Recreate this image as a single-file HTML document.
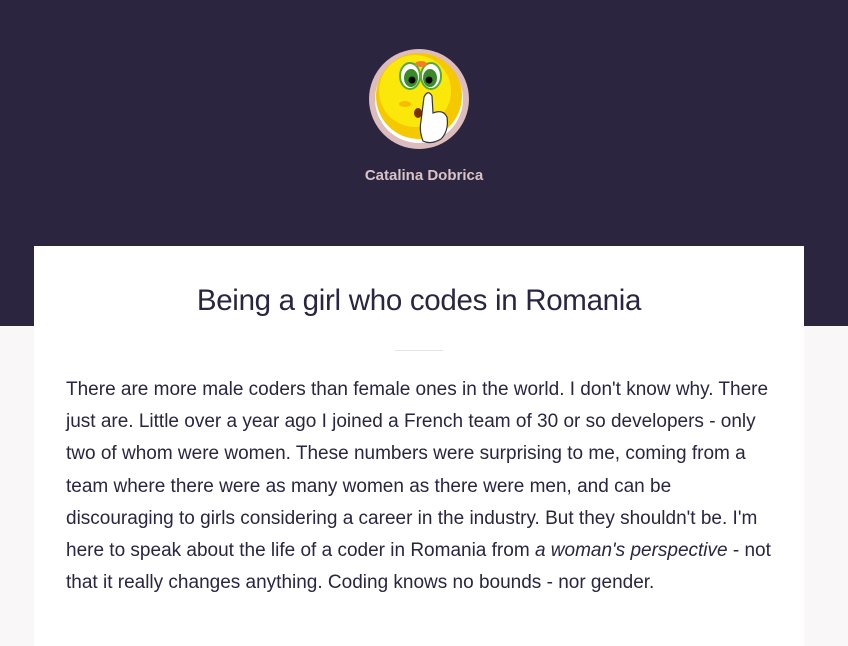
<!DOCTYPE html>
<html><head><meta charset="utf-8"><style>
html,body{margin:0;padding:0;}
body{width:848px;height:608px;overflow:hidden;background:#f9f7f8;font-family:"Liberation Sans",sans-serif;position:relative;}
.hdr{position:absolute;left:0;top:0;width:848px;height:326px;background:#2c2540;}
.av{position:absolute;left:369px;top:49px;width:100px;height:100px;border-radius:50%;background:#dcbcbc;}
.name{position:absolute;left:0;width:848px;top:167px;text-align:center;color:#d9c3c5;font-weight:bold;font-size:15px;}
.card{position:absolute;left:34px;top:246px;width:770px;height:400px;background:#fff;}
h1{position:absolute;top:284px;left:0;width:838px;text-align:center;margin:0;font-weight:normal;font-size:29.5px;color:#2a2540;letter-spacing:-0.3px;}
.div{position:absolute;left:395px;top:350px;width:48px;height:1px;background:#e3e3e3;}
.p{position:absolute;left:66px;top:374px;color:#2a2540;font-size:19px;line-height:32.2px;letter-spacing:0;}
.p div{white-space:nowrap;}
</style></head><body>
<div class="hdr"></div>
<div class="av">
<svg width="100" height="100" viewBox="0 0 100 100">
<circle cx="50" cy="50" r="44" fill="#fff"/>
<circle cx="50" cy="47" r="43" fill="#f6c800"/>
<circle cx="46" cy="42" r="36" fill="#fbe80a"/>
<ellipse cx="41" cy="27" rx="10" ry="13" fill="#fff" stroke="#5a3" stroke-width="2"/>
<ellipse cx="62" cy="27" rx="10" ry="13" fill="#fff" stroke="#5a3" stroke-width="2"/>
<ellipse cx="42" cy="29" rx="7" ry="9" fill="#3a8a2a"/>
<ellipse cx="61" cy="29" rx="7" ry="9" fill="#3a8a2a"/>
<circle cx="43" cy="31" r="3.5" fill="#000"/><circle cx="60" cy="31" r="3.5" fill="#000"/>
<ellipse cx="52" cy="15" rx="6" ry="3" fill="#f08020"/>
<ellipse cx="36" cy="55" rx="6" ry="3" fill="#f3a000" opacity=".6"/>
<ellipse cx="49" cy="64" rx="4" ry="5" fill="#7a3000"/>
<path d="M55 48 Q59 40 63 47 L64 64 Q74 60 78 68 Q80 82 72 90 Q62 96 54 92 Q50 82 52 72 Z" fill="#fff" stroke="#333" stroke-width="1.2"/>
</svg>
</div>
<div class="name">Catalina Dobrica</div>
<div class="card"></div>
<h1>Being a girl who codes in Romania</h1>
<div class="div"></div>
<div class="p">
<div>There are more male coders than female ones in the world. I don't know why. There</div>
<div>just are. Little over a year ago I joined a French team of 30 or so developers - only</div>
<div>two of whom were women. These numbers were surprising to me, coming from a</div>
<div>team where there were as many women as there were men, and can be</div>
<div>discouraging to girls considering a career in the industry. But they shouldn't be. I'm</div>
<div>here to speak about the life of a coder in Romania from <i>a woman's perspective</i> - not</div>
<div>that it really changes anything. Coding knows no bounds - nor gender.</div>
</div>
</body></html>
